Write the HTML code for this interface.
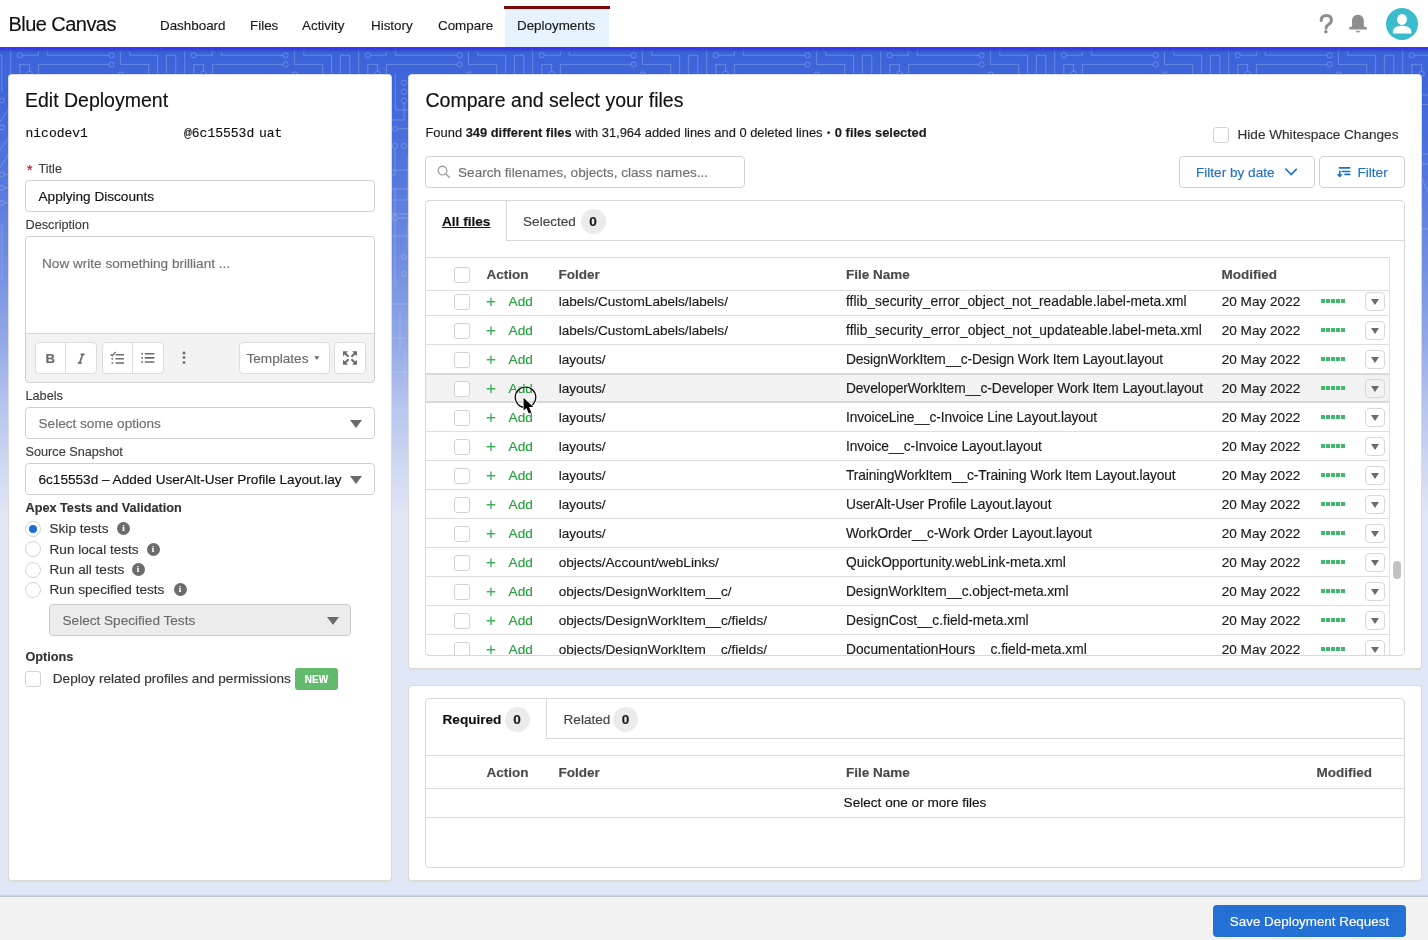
<!DOCTYPE html>
<html><head><meta charset="utf-8">
<style>
*{box-sizing:border-box;margin:0;padding:0}
html,body{width:1428px;height:940px;overflow:hidden;background:#fff}
body{font-family:"Liberation Sans",sans-serif;color:#1a1a1a;position:relative}
.a{position:absolute;white-space:nowrap}
#bg{position:absolute;left:0;top:47px;width:1428px;height:850px;
 background:linear-gradient(to bottom,#3b63d9 3px,#4168da 53px,#5376dd 125px,#7490e2 223px,#95abe8 301px,#b6c5ee 360px,#ced8f2 419px,#dfe6f5 468px)}
#bline{position:absolute;left:0;top:47px;width:1428px;height:3px;background:#3b35f7}
#bshadow{position:absolute;left:0;top:50px;width:1428px;height:2px;background:#3154c0;opacity:.7}
.panel{position:absolute;background:#fff;border-radius:3px;box-shadow:0 0 0 1px #dcdad4,0 1px 2px rgba(0,0,0,.12)}
.nav{position:absolute;top:18px;font-size:13.4px;color:#1a1a1a}
.lbl{position:absolute;font-size:12.7px;color:#3e3e3e}
.inp{position:absolute;border:1px solid #cfcfcf;border-radius:4px;background:#fff}
.tb{position:absolute;border:1px solid #dcdcdc;border-radius:4px;background:#fff}
.ph{color:#6f6f6f}
.radio{position:absolute;left:25px;width:16px;height:16px;border:1px solid #d4d4d4;border-radius:50%;background:#fff}
.info{position:absolute;width:13px;height:13px;border-radius:50%;background:#6b6b6b;color:#fff;font-size:9px;font-weight:bold;text-align:center;line-height:13px;font-family:"Liberation Serif",serif}
.caret{position:absolute;width:0;height:0;border-left:6px solid transparent;border-right:6px solid transparent;border-top:8px solid #6b6b6b}
.cb{position:absolute;width:16px;height:16px;border:1px solid #d2d2d2;border-radius:3px;background:#fff}
.badge{position:absolute;width:25px;height:25px;border-radius:50%;background:#ebebeb;font-weight:bold;font-size:13.6px;text-align:center;line-height:26px;color:#1a1a1a}
.th{position:absolute;font-weight:bold;font-size:13.5px;color:#4a4a4a;margin-top:0.3px}
.row{position:absolute;left:426px;width:963px;height:29px;border-bottom:1px solid #dddddd}
.row .cb{left:28px;top:7px}
.row .plus{position:absolute;left:60px;top:5px;font-size:17px;color:#3cb059}
.row .add{position:absolute;left:82.6px;top:7px;font-size:13.6px;color:#23a03b}
.row .fold{position:absolute;left:132.7px;top:7px;font-size:13.6px;color:#1a1a1a}
.row .fn{position:absolute;left:420px;top:7px;font-size:13.75px;color:#1a1a1a}
.row .mod{position:absolute;left:795.7px;top:7px;font-size:13.6px;color:#1a1a1a}
.row .dots{position:absolute;left:895px;top:12px;width:25px;height:4px;
 background:repeating-linear-gradient(to right,#3dba6b 0 4px,transparent 4px 5px)}
.row .dd{position:absolute;left:939px;top:5px;width:19.5px;height:19px;border:1px solid #d8d8d8;border-radius:4px;background:#fff}
.row .dd:after{content:"";position:absolute;left:4.5px;top:5.5px;border-left:4.5px solid transparent;border-right:4.5px solid transparent;border-top:6px solid #6b6b6b}
.row.hov{background:#f2f2f2;border-top:2px solid #d9d9d9;border-bottom:2px solid #d9d9d9;margin-top:-1px;height:30px}
.row.hov .cb{top:6px}.row.hov .plus{top:4px}.row.hov .add,.row.hov .fold,.row.hov .fn,.row.hov .mod{top:6px}.row.hov .dots{top:11px}.row.hov .dd{top:4px;background:#f2f2f2}
#root{position:absolute;left:0;top:0;width:1428px;height:940px;will-change:transform;overflow:hidden;-webkit-text-stroke:0.15px currentColor}
</style></head><body><div id="root">

<!-- header -->
<div class="a" style="left:8.5px;top:12.5px;font-size:20px;letter-spacing:-0.55px;color:#111">Blue Canvas</div>
<div class="nav" style="left:160px">Dashboard</div>
<div class="nav" style="left:250px">Files</div>
<div class="nav" style="left:302px">Activity</div>
<div class="nav" style="left:371px">History</div>
<div class="nav" style="left:438px">Compare</div>
<div class="a" style="left:505px;top:9px;width:104px;height:38px;background:#e6f2fc"></div>
<div class="a" style="left:504px;top:6px;width:106px;height:3px;background:#7a0a0a"></div>
<div class="nav" style="left:517px">Deployments</div>


<!-- header icons -->
<svg class="a" style="left:1316px;top:12px" width="20" height="24" viewBox="0 0 20 24">
 <path d="M5.2 8.4 C5.2 4.8 7.4 3.4 10.4 3.4 C13.6 3.4 15.4 5.4 15.4 8.2 C15.4 10.8 13.6 11.8 12.2 12.8 C10.8 13.8 10.2 14.6 10.1 16.2" fill="none" stroke="#8e8e8e" stroke-width="3" stroke-linecap="round"/>
 <circle cx="9.9" cy="19.7" r="1.75" fill="#8e8e8e"/>
</svg>
<svg class="a" style="left:1349px;top:14px" width="19" height="20" viewBox="0 0 19 20">
 <path d="M8.9 0.8C5.6 0.8 3 3.2 3 7V12.4L0.3 13.3V15.4H17.8V13.3L14.8 12.4V7C14.8 3.2 12.2 0.8 8.9 0.8Z" fill="#8e8e8e"/>
 <path d="M6.9 16.7H10.9A2 1.9 0 0 1 6.9 16.7Z" fill="#8e8e8e"/>
</svg>
<svg class="a" style="left:1386px;top:8px" width="32" height="32" viewBox="0 0 32 32">
 <circle cx="16" cy="16" r="16" fill="#3bbccc"/>
 <ellipse cx="16" cy="11.45" rx="4.9" ry="5.45" fill="#fff"/>
 <path d="M6.9 25.4V23.6C6.9 20 10.2 17.8 16 17.8C21.8 17.8 25.3 20 25.3 23.6V25.4Z" fill="#fff"/>
</svg>

<!-- bg -->
<div id="bg"></div>
<svg class="a" style="left:0;top:50px" width="1428" height="420">
<defs>
<linearGradient id="fade" x1="0" y1="0" x2="0" y2="1"><stop offset="0" stop-color="#fff" stop-opacity="1"/><stop offset="0.6" stop-color="#fff" stop-opacity="0.85"/><stop offset="0.9" stop-color="#fff" stop-opacity="0.35"/><stop offset="1" stop-color="#fff" stop-opacity="0"/></linearGradient>
<mask id="fm"><rect x="0" y="0" width="1428" height="420" fill="url(#fade)"/></mask>
<pattern id="circ" x="0" y="0" width="174" height="420" patternUnits="userSpaceOnUse">
<g fill="none" stroke="#ffffff" stroke-opacity="0.22" stroke-width="1">
<path d="M10.7 0V24"/>
<circle cx="19.8" cy="5.3" r="2.6"/>
<path d="M22.4 5.3H38.4V0"/>
<path d="M47.3 0V5.3H109"/>
<circle cx="111.6" cy="5.3" r="2.6"/>
<circle cx="111.6" cy="14.4" r="2.6"/>
<path d="M109 14.4H38.4V120H60"/>
<path d="M29.6 21V14.4H19.8V70"/>
<circle cx="29.6" cy="23.6" r="2.6"/>
<path d="M120.4 0V14.4H148.7V90H170"/>
<path d="M129.8 0V5.3H157.6V60"/>
<path d="M166.4 60V5.3H174"/>
<path d="M0 5.3H1.8V42"/>
<circle cx="1.9" cy="50.6" r="2.5"/>
<path d="M0 71.7L20 42"/>
<circle cx="1.9" cy="77.5" r="2.5"/>
<path d="M0 100.5L14 79"/><path d="M0 117.7L14 95"/>
<circle cx="1.9" cy="124.4" r="2.5"/><circle cx="1.9" cy="137.8" r="2.5"/><circle cx="1.9" cy="153" r="2.5"/>
<path d="M4.4 124.4H16M4.4 137.8H16M4.4 153H16"/>
<path d="M1.9 173V230"/>
<path d="M26 45H40M26 54.5H40M26 104H40M26 114H40M30 129L40 150M26 179H40"/>
<circle cx="120.8" cy="24.6" r="2.6"/>
<path d="M47.3 24V60H68"/>
<circle cx="56.2" cy="32.8" r="2.6"/><circle cx="56.2" cy="41.7" r="2.6"/><circle cx="56.2" cy="50.6" r="2.6"/>
<path d="M56.2 53.2V70H44"/>
<circle cx="47" cy="78.7" r="2.6"/><path d="M49.6 78.7H62"/>
<circle cx="47" cy="96" r="2.6"/><circle cx="56" cy="96" r="2.6"/>
<path d="M47 98.6V125H40"/><path d="M60 105V150H45"/>
<circle cx="47" cy="168" r="2.6"/><path d="M49.6 168H60V200"/>
<path d="M85 24V110H100V200"/><circle cx="85" cy="120" r="2.6"/>
<path d="M135 30V130H120"/><circle cx="140" cy="150" r="2.6"/>
<path d="M44 139H60M44 164H60M47 139V237M44 186H60M44 254H60M44 288H58M44 322H60M44 360H60M44 398H60M52 260V300M57 300V340"/>
<circle cx="56" cy="207" r="2.5"/><circle cx="56" cy="224" r="2.5"/>
</g>
</pattern>
</defs>
<rect x="0" y="0" width="1428" height="420" fill="url(#circ)" mask="url(#fm)"/>
</svg>
<div id="bline"></div>
<div id="bshadow"></div>

<!-- left panel -->
<div class="panel" style="left:9px;top:75px;width:382px;height:805px"></div>
<div class="a" style="left:25px;top:89px;font-size:19.5px;color:#111">Edit Deployment</div>
<div class="a" style="left:25.5px;top:126px;font-family:'Liberation Mono',monospace;font-size:13px;color:#111">nicodev1</div>
<div class="a" style="left:184px;top:126px;font-family:'Liberation Mono',monospace;font-size:13px;color:#111">@6c15553d</div>
<div class="a" style="left:259px;top:126px;font-family:'Liberation Mono',monospace;font-size:13px;color:#111">uat</div>

<div class="a" style="left:27px;top:162px;font-size:14px;color:#e0001b">*</div>
<div class="lbl" style="left:38.5px;top:161.5px">Title</div>
<div class="inp" style="left:25px;top:180px;width:350px;height:32px"></div>
<div class="a" style="left:38.5px;top:189px;font-size:13.6px;color:#111">Applying Discounts</div>

<div class="lbl" style="left:25.5px;top:217.5px">Description</div>
<div class="inp" style="left:25px;top:236px;width:350px;height:147px;background:#f2f2f2;overflow:hidden">
  <div style="position:absolute;left:0;top:0;width:348px;height:97px;background:#fff;border-bottom:1px solid #d9d9d9"></div>
</div>
<div class="a ph" style="left:42px;top:255.5px;font-size:13.6px">Now write something brilliant ...</div>

<div class="tb" style="left:34.5px;top:342px;width:62px;height:32px"></div>
<div class="a" style="left:65px;top:342px;width:1px;height:32px;background:#dcdcdc"></div>
<div class="tb" style="left:101.5px;top:342px;width:62px;height:32px"></div>
<div class="a" style="left:132px;top:342px;width:1px;height:32px;background:#dcdcdc"></div>
<div class="tb" style="left:238.5px;top:342px;width:91px;height:32px"></div>
<div class="tb" style="left:334px;top:342px;width:31.5px;height:32px"></div>
<div class="a" style="left:246.5px;top:350.5px;font-size:13.6px;color:#6b6b6b">Templates</div>

<div class="lbl" style="left:25.5px;top:388.5px">Labels</div>
<div class="inp" style="left:25px;top:407px;width:350px;height:32px"></div>
<div class="a ph" style="left:38.5px;top:416px;font-size:13.6px">Select some options</div>
<div class="caret" style="left:350px;top:419.5px"></div>

<div class="lbl" style="left:25.5px;top:444.5px">Source Snapshot</div>
<div class="inp" style="left:25px;top:463px;width:350px;height:32px"></div>
<div class="a" style="left:38.5px;top:472px;font-size:13.6px;color:#111">6c15553d – Added UserAlt-User Profile Layout.lay</div>
<div class="caret" style="left:350px;top:475.5px"></div>

<div class="a" style="left:25.5px;top:500.5px;font-size:12.7px;font-weight:bold;color:#333">Apex Tests and Validation</div>
<div class="radio" style="top:521px"><div style="position:absolute;left:3px;top:3px;width:8px;height:8px;border-radius:50%;background:#1d6fd8"></div></div>
<div class="a" style="left:49.5px;top:521px;font-size:13.6px;color:#333">Skip tests</div>
<div class="info" style="left:117px;top:522px">i</div>
<div class="radio" style="top:541px"></div>
<div class="a" style="left:49.5px;top:542px;font-size:13.6px;color:#333">Run local tests</div>
<div class="info" style="left:146.5px;top:542.5px">i</div>
<div class="radio" style="top:562px"></div>
<div class="a" style="left:49.5px;top:562px;font-size:13.6px;color:#333">Run all tests</div>
<div class="info" style="left:131.5px;top:563px">i</div>
<div class="radio" style="top:582px"></div>
<div class="a" style="left:49.5px;top:582px;font-size:13.6px;color:#333">Run specified tests</div>
<div class="info" style="left:173.5px;top:583px">i</div>

<div class="inp" style="left:49px;top:604px;width:302px;height:32px;background:#ececec;border-color:#c8c8c8"></div>
<div class="a" style="left:62.5px;top:613px;font-size:13.6px;color:#6b6b6b">Select Specified Tests</div>
<div class="caret" style="left:327px;top:617px"></div>

<div class="a" style="left:25.5px;top:649.5px;font-size:12.7px;font-weight:bold;color:#333">Options</div>
<div class="cb" style="left:25px;top:671px"></div>
<div class="a" style="left:52.8px;top:671px;font-size:13.6px;color:#333">Deploy related profiles and permissions</div>
<div class="a" style="left:295px;top:668px;width:43px;height:22px;background:#62bb6c;border-radius:3px;color:#fff;font-size:10px;font-weight:bold;text-align:center;line-height:23px">NEW</div>

<!-- right top panel -->
<div class="panel" style="left:409px;top:75px;width:1012px;height:593px"></div>
<div class="a" style="left:425.5px;top:89px;font-size:19.5px;color:#111">Compare and select your files</div>
<div class="a" style="left:425.5px;top:125px;font-size:12.9px;color:#1a1a1a">Found <b>349 different files</b> with 31,964 added lines and 0 deleted lines <span style="font-size:9px;font-weight:bold;position:relative;top:-1px;margin:0 1px">&#8226;</span> <b>0 files selected</b></div>
<div class="cb" style="left:1213px;top:127px;border-radius:3px"></div>
<div class="a" style="left:1237.5px;top:126.5px;font-size:13.6px;color:#333">Hide Whitespace Changes</div>

<div class="inp" style="left:425px;top:156px;width:320px;height:32px"></div>
<div class="a ph" style="left:458px;top:165px;font-size:13.6px">Search filenames, objects, class names...</div>

<div class="inp" style="left:1179px;top:156px;width:136px;height:32px"></div>
<div class="a" style="left:1196px;top:165px;font-size:13.6px;color:#1d6fd0">Filter by date</div>
<div class="inp" style="left:1319px;top:156px;width:86px;height:32px"></div>
<div class="a" style="left:1357.5px;top:165px;font-size:13.6px;color:#1d6fd0">Filter</div>

<!-- table container -->
<div class="a" style="left:425px;top:200px;width:980px;height:456px;border:1px solid #d8d8d8;border-radius:4px;overflow:hidden;background:#fff">
</div>
<div class="a" style="left:506px;top:240px;width:898px;height:1px;background:#d8d8d8"></div>
<div class="a" style="left:506px;top:201px;width:1px;height:40px;background:#d8d8d8"></div>
<div class="a" style="left:442px;top:214px;font-size:13.6px;font-weight:bold;color:#111;text-decoration:underline">All files</div>
<div class="a" style="left:523px;top:214px;font-size:13.6px;color:#444">Selected</div>
<div class="badge" style="left:580.5px;top:209px">0</div>

<div id="rows" class="a" style="left:0;top:0;width:1428px;height:940px;clip-path:inset(291px 0 285px 0)">
<div class="row" style="top:287px"><div class="cb"></div><div class="plus">+</div><div class="add">Add</div><div class="fold">labels/CustomLabels/labels/</div><div class="fn" style="letter-spacing:0.042px">fflib_security_error_object_not_readable.label-meta.xml</div><div class="mod">20 May 2022</div><div class="dots"></div><div class="dd"></div></div>
<div class="row" style="top:316px"><div class="cb"></div><div class="plus">+</div><div class="add">Add</div><div class="fold">labels/CustomLabels/labels/</div><div class="fn" style="letter-spacing:0.054px">fflib_security_error_object_not_updateable.label-meta.xml</div><div class="mod">20 May 2022</div><div class="dots"></div><div class="dd"></div></div>
<div class="row" style="top:345px"><div class="cb"></div><div class="plus">+</div><div class="add">Add</div><div class="fold">layouts/</div><div class="fn" style="letter-spacing:-0.119px">DesignWorkItem__c-Design Work Item Layout.layout</div><div class="mod">20 May 2022</div><div class="dots"></div><div class="dd"></div></div>
<div class="row hov" style="top:374px"><div class="cb"></div><div class="plus">+</div><div class="add">Add</div><div class="fold">layouts/</div><div class="fn" style="letter-spacing:-0.104px">DeveloperWorkItem__c-Developer Work Item Layout.layout</div><div class="mod">20 May 2022</div><div class="dots"></div><div class="dd"></div></div>
<div class="row" style="top:403px"><div class="cb"></div><div class="plus">+</div><div class="add">Add</div><div class="fold">layouts/</div><div class="fn" style="letter-spacing:-0.105px">InvoiceLine__c-Invoice Line Layout.layout</div><div class="mod">20 May 2022</div><div class="dots"></div><div class="dd"></div></div>
<div class="row" style="top:432px"><div class="cb"></div><div class="plus">+</div><div class="add">Add</div><div class="fold">layouts/</div><div class="fn" style="letter-spacing:-0.116px">Invoice__c-Invoice Layout.layout</div><div class="mod">20 May 2022</div><div class="dots"></div><div class="dd"></div></div>
<div class="row" style="top:461px"><div class="cb"></div><div class="plus">+</div><div class="add">Add</div><div class="fold">layouts/</div><div class="fn" style="letter-spacing:-0.115px">TrainingWorkItem__c-Training Work Item Layout.layout</div><div class="mod">20 May 2022</div><div class="dots"></div><div class="dd"></div></div>
<div class="row" style="top:490px"><div class="cb"></div><div class="plus">+</div><div class="add">Add</div><div class="fold">layouts/</div><div class="fn" style="letter-spacing:-0.050px">UserAlt-User Profile Layout.layout</div><div class="mod">20 May 2022</div><div class="dots"></div><div class="dd"></div></div>
<div class="row" style="top:519px"><div class="cb"></div><div class="plus">+</div><div class="add">Add</div><div class="fold">layouts/</div><div class="fn" style="letter-spacing:-0.111px">WorkOrder__c-Work Order Layout.layout</div><div class="mod">20 May 2022</div><div class="dots"></div><div class="dd"></div></div>
<div class="row" style="top:548px"><div class="cb"></div><div class="plus">+</div><div class="add">Add</div><div class="fold">objects/Account/webLinks/</div><div class="fn">QuickOpportunity.webLink-meta.xml</div><div class="mod">20 May 2022</div><div class="dots"></div><div class="dd"></div></div>
<div class="row" style="top:577px"><div class="cb"></div><div class="plus">+</div><div class="add">Add</div><div class="fold">objects/DesignWorkItem__c/</div><div class="fn" style="letter-spacing:-0.058px">DesignWorkItem__c.object-meta.xml</div><div class="mod">20 May 2022</div><div class="dots"></div><div class="dd"></div></div>
<div class="row" style="top:606px"><div class="cb"></div><div class="plus">+</div><div class="add">Add</div><div class="fold">objects/DesignWorkItem__c/fields/</div><div class="fn">DesignCost__c.field-meta.xml</div><div class="mod">20 May 2022</div><div class="dots"></div><div class="dd"></div></div>
<div class="row" style="top:635px"><div class="cb"></div><div class="plus">+</div><div class="add">Add</div><div class="fold">objects/DesignWorkItem__c/fields/</div><div class="fn">DocumentationHours__c.field-meta.xml</div><div class="mod">20 May 2022</div><div class="dots"></div><div class="dd"></div></div>
</div>

<div class="a" style="left:426px;top:257px;width:963px;height:1px;background:#dddddd"></div>
<div class="a" style="left:426px;top:290px;width:963px;height:1px;background:#dddddd"></div>
<div class="cb" style="left:454px;top:267px"></div>
<div class="th" style="left:486.5px;top:267px">Action</div>
<div class="th" style="left:558.5px;top:267px">Folder</div>
<div class="th" style="left:846px;top:267px">File Name</div>
<div class="th" style="left:1221.5px;top:267px">Modified</div>
<div class="a" style="left:1389px;top:257px;width:1px;height:398px;background:#e2e2e2"></div>
<div class="a" style="left:1393px;top:561px;width:8px;height:18px;border-radius:4px;background:#c1c1c1"></div>

<!-- right bottom panel -->
<div class="panel" style="left:409px;top:686px;width:1012px;height:194px"></div>
<div class="a" style="left:425px;top:698px;width:980px;height:170px;border:1px solid #d8d8d8;border-radius:4px;background:#fff"></div>
<div class="a" style="left:546px;top:738px;width:858px;height:1px;background:#d8d8d8"></div>
<div class="a" style="left:546px;top:699px;width:1px;height:40px;background:#d8d8d8"></div>
<div class="a" style="left:442.5px;top:712px;font-size:13.6px;font-weight:bold;color:#111">Required</div>
<div class="badge" style="left:504.5px;top:707px">0</div>
<div class="a" style="left:563.5px;top:712px;font-size:13.6px;color:#444">Related</div>
<div class="badge" style="left:613px;top:707px">0</div>
<div class="a" style="left:426px;top:755px;width:978px;height:1px;background:#dddddd"></div>
<div class="a" style="left:426px;top:788px;width:978px;height:1px;background:#dddddd"></div>
<div class="a" style="left:426px;top:817px;width:978px;height:1px;background:#dddddd"></div>
<div class="th" style="left:486.5px;top:765px">Action</div>
<div class="th" style="left:558.5px;top:765px">Folder</div>
<div class="th" style="left:846px;top:765px">File Name</div>
<div class="th" style="left:1316.5px;top:765px">Modified</div>
<div class="a" style="left:426px;top:795px;width:978px;text-align:center;font-size:13.6px;color:#111">Select one or more files</div>


<!-- toolbar icons -->
<div class="a" style="left:45.5px;top:350.8px;font-size:13.2px;font-weight:bold;color:#6b6b6b">B</div>
<svg class="a" style="left:76px;top:352px" width="10" height="12" viewBox="0 0 10 12">
 <path d="M4.6 2.3H8.6M1.8 10.8H5.8M6.7 2.3L3.7 10.8" fill="none" stroke="#6b6b6b" stroke-width="1.7"/>
</svg>
<svg class="a" style="left:109px;top:350px" width="18" height="16" viewBox="0 0 18 16">
 <path d="M1.6 4.2L3.2 5.8L6.6 2" fill="none" stroke="#6b6b6b" stroke-width="1.3"/>
 <path d="M6.6 4.7H15M6.6 8.8H15M6.6 13H15" fill="none" stroke="#6b6b6b" stroke-width="1.6"/>
 <rect x="2.5" y="8" width="1.6" height="1.6" fill="#6b6b6b"/><rect x="2.5" y="12.2" width="1.6" height="1.6" fill="#6b6b6b"/>
</svg>
<svg class="a" style="left:139px;top:350px" width="18" height="16" viewBox="0 0 18 16">
 <path d="M5.8 3.7H15.4M5.8 7.9H15.4M5.8 12H15.4" fill="none" stroke="#6b6b6b" stroke-width="1.6"/>
 <rect x="2.3" y="2.9" width="1.7" height="1.6" fill="#6b6b6b"/><rect x="2.3" y="7.1" width="1.7" height="1.6" fill="#6b6b6b"/><rect x="2.3" y="11.2" width="1.7" height="1.6" fill="#6b6b6b"/>
</svg>
<svg class="a" style="left:180px;top:350px" width="8" height="16" viewBox="0 0 8 16">
 <circle cx="4" cy="3" r="1.4" fill="#6b6b6b"/><circle cx="4" cy="7.6" r="1.4" fill="#6b6b6b"/><circle cx="4" cy="12.6" r="1.4" fill="#6b6b6b"/>
</svg>
<svg class="a" style="left:313px;top:355px" width="8" height="6" viewBox="0 0 8 6">
 <path d="M1.2 1.2H6.4L3.8 4.9Z" fill="#6b6b6b"/>
</svg>
<svg class="a" style="left:342px;top:350px" width="16" height="16" viewBox="0 0 16 16">
 <g fill="#6b6b6b">
 <path d="M1 1.3H6L1 6.3Z"/><path d="M15 1.3H10L15 6.3Z"/><path d="M1 14.8H6L1 9.8Z"/><path d="M15 14.8H10L15 9.8Z"/>
 </g>
 <path d="M2.5 2.8L6.6 6.8M13.5 2.8L9.4 6.8M2.5 13.3L6.6 9.3M13.5 13.3L9.4 9.3" stroke="#6b6b6b" stroke-width="1.9" fill="none"/>
</svg>

<!-- search / filter icons -->
<svg class="a" style="left:436px;top:164px" width="16" height="16" viewBox="0 0 16 16">
 <circle cx="6.5" cy="6.6" r="4.3" fill="none" stroke="#a5a5a5" stroke-width="1.4"/>
 <path d="M9.6 9.7L13.6 13.6" stroke="#a5a5a5" stroke-width="1.5" fill="none"/>
</svg>
<svg class="a" style="left:1283px;top:165px" width="16" height="12" viewBox="0 0 16 12">
 <path d="M2.3 3.5L8.2 9.5L13.7 3.8" fill="none" stroke="#1d6fd6" stroke-width="1.7"/>
</svg>
<svg class="a" style="left:1335px;top:165px" width="16" height="14" viewBox="0 0 16 14">
 <path d="M4.4 2.8H14.7M7.2 6.5H14.7M10 9.3H14.7" fill="none" stroke="#1d6fd6" stroke-width="1.7" stroke-linecap="round"/>
 <path d="M4.7 5.6V11" fill="none" stroke="#1d6fd6" stroke-width="1.7"/>
 <path d="M1.6 9.3H7.8L4.7 12.6Z" fill="#1d6fd6"/>
</svg>

<!-- cursor -->
<svg class="a" style="left:510px;top:382px" width="30" height="34" viewBox="0 0 30 34">
 <circle cx="15.5" cy="15.3" r="10.8" fill="none" stroke="#fff" stroke-width="2" stroke-opacity="0.85"/>
 <circle cx="15.5" cy="15.3" r="10.3" fill="none" stroke="#000" stroke-width="1.2"/>
 <path d="M13.6 15.8V28.6L16.5 25.9L18.9 31.6L21.4 30.5L19 25H23.2Z" fill="#000" stroke="#fff" stroke-width="1.3" stroke-linejoin="round" paint-order="stroke"/>
</svg>

<!-- footer -->
<div class="a" style="left:0;top:894px;width:1428px;height:3px;background:linear-gradient(#dfe6f5,#b9c2d2)"></div>
<div class="a" style="left:0;top:897px;width:1428px;height:43px;background:#f2f2f2"></div>
<div class="a" style="left:1213px;top:905px;width:193px;height:32px;background:#2470d4;border-radius:4px;color:#fff;font-size:13.4px;text-align:center;line-height:34px">Save Deployment Request</div>

</div></body></html>
